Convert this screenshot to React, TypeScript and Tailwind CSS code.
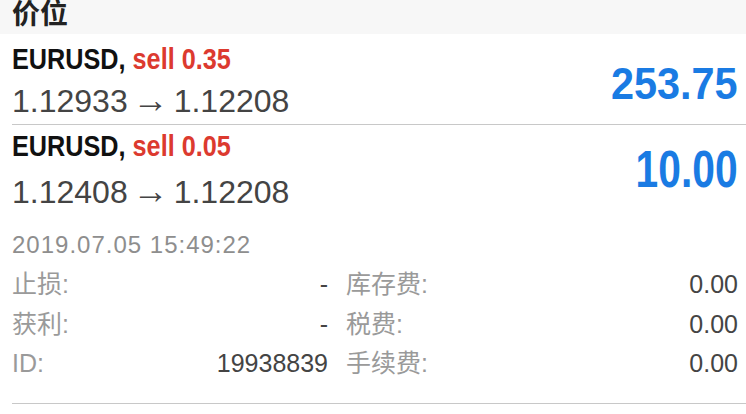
import React from "react";

const bold = { fontFamily: '"Liberation Sans", Arial, sans-serif' };

function Row({
  sym,
  side,
  from,
  to,
  profit,
  pt,
  subMt,
  num,
}: {
  sym: string;
  side: string;
  from: string;
  to: string;
  profit: string;
  pt: string;
  subMt: string;
  num: string;
}) {
  return (
    <div className={`flex items-start justify-between pr-[8px] ${pt}`}>
      <div className="flex flex-col">
        <div className="h-[32px]">
          <span
            className="inline-block origin-left scale-x-[0.87] whitespace-nowrap text-[29px] leading-[32px] font-bold"
            style={bold}
          >
            <span className="text-[#111]">{sym}, </span>
            <span className="text-[#dc3a2f]">{side}</span>
          </span>
        </div>
        <div className={`${subMt} flex items-center text-[32px] leading-[36px] text-[#444]`}>
          <span>{from}</span>
          <span className="mx-[5px] -mt-[3px] text-[36px] leading-[36px]">→</span>
          <span>{to}</span>
        </div>
      </div>
      <span
        className={`inline-block origin-right whitespace-nowrap font-bold text-[#1a7be3] ${num}`}
        style={bold}
      >
        {profit}
      </span>
    </div>
  );
}

function Detail({ l1, v1, l2, v2 }: { l1: string; v1: string; l2: string; v2: string }) {
  return (
    <div className="flex h-[39.5px] items-center text-[25px] leading-[39.5px]">
      <div className="flex w-[316px] justify-between">
        <span className="text-[#9a9a9a]">{l1}</span>
        <span className="text-[#444]">{v1}</span>
      </div>
      <div className="ml-[18px] flex flex-1 justify-between pr-[8px]">
        <span className="text-[#9a9a9a]">{l2}</span>
        <span className="text-[#444]">{v2}</span>
      </div>
    </div>
  );
}

export default function App() {
  return (
    <div
      className="w-[746px] h-[414px] overflow-hidden bg-white"
      style={{ fontFamily: '"Liberation Sans", "Noto Sans CJK SC", sans-serif' }}
    >
      <div className="h-[34px] bg-[#f7f7f7] pl-[12px] text-[28px] leading-[30px] font-bold text-[#222]">
        价位
      </div>
      <div className="pl-[12px]">
        <div className="h-[91px] border-b border-[#c8c8c8]">
          <Row
            sym="EURUSD"
            side="sell 0.35"
            from="1.12933"
            to="1.12208"
            profit="253.75"
            pt="pt-[9px]"
            subMt="mt-[8px]"
            num="mt-[18px] text-[45px] leading-[45px] scale-x-[0.92]"
          />
        </div>
        <div>
          <Row
            sym="EURUSD"
            side="sell 0.05"
            from="1.12408"
            to="1.12208"
            profit="10.00"
            pt="pt-[5px]"
            subMt="mt-[12px]"
            num="mt-[14px] text-[51px] leading-[51px] scale-x-[0.80]"
          />
          <div className="mt-[21px] text-[24px] leading-[28px] tracking-[1px] text-[#8e8e8e]">
            2019.07.05 15:49:22
          </div>
          <div className="mt-[6px]">
            <Detail l1="止损:" v1="-" l2="库存费:" v2="0.00" />
            <Detail l1="获利:" v1="-" l2="税费:" v2="0.00" />
            <Detail l1="ID:" v1="19938839" l2="手续费:" v2="0.00" />
          </div>
          <div className="mt-[19px] border-b border-[#c8c8c8]" />
        </div>
      </div>
    </div>
  );
}
